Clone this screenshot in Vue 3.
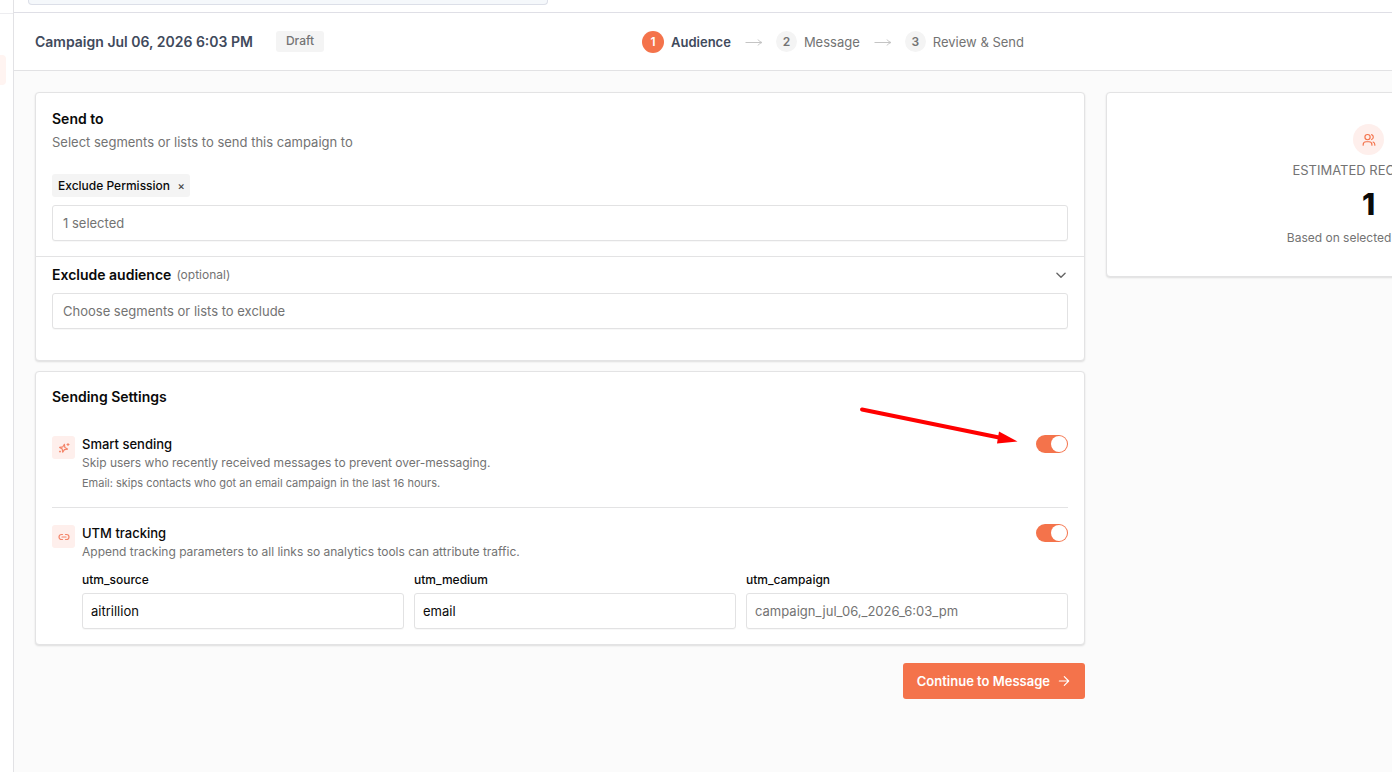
<script setup>
import { ref } from 'vue'

const steps = [
  { number: 1, label: 'Audience', active: true },
  { number: 2, label: 'Message', active: false },
  { number: 3, label: 'Review & Send', active: false },
]
const smartSending = ref(true)
const utmTracking = ref(true)
const utmFields = ref([
  { id: 'utm_source', value: 'aitrillion', placeholder: '' },
  { id: 'utm_medium', value: 'email', placeholder: '' },
  { id: 'utm_campaign', value: '', placeholder: 'campaign_jul_06,_2026_6:03_pm' },
])
</script>

<template>
  <div class="shell">
    <aside class="sidebar">
      <div class="sidebar-top"></div>
      <div class="sidebar-active"></div>
    </aside>
    <div class="main">
      <div class="topbar">
        <div class="search"></div>
      </div>

      <header class="header">
        <div class="heading">
          <h1>Campaign Jul 06, 2026 6:03 PM</h1>
          <span class="draft">Draft</span>
        </div>
        <ol class="steps">
          <li v-for="step in steps" :key="step.number" class="step" :class="{ active: step.active }">
            <svg v-if="step.number > 1" class="step-arrow" width="18" height="8" viewBox="0 0 18 8" fill="none" stroke="currentColor">
              <path d="M0.5 4.5H16.5M13 1.5Q14.5 4 17 4.5Q14.5 5 13 7.5" />
            </svg>
            <span class="step-number">{{ step.number }}</span>
            <span>{{ step.label }}</span>
          </li>
        </ol>
      </header>

      <main class="content">
        <div class="forms">
          <section class="card">
            <div class="send-to">
              <h2>Send to</h2>
              <p class="desc">Select segments or lists to send this campaign to</p>
              <span class="chip">Exclude Permission <button type="button" aria-label="Remove Exclude Permission">×</button></span>
              <input class="field picker" type="text" placeholder="1 selected" aria-label="Send to" />
            </div>
            <div class="exclude">
              <button class="exclude-toggle" type="button">
                <span class="exclude-title">Exclude audience</span>
                <span class="optional">(optional)</span>
                <svg class="chevron" width="14" height="14" viewBox="0 0 24 24" fill="none" stroke="currentColor" stroke-width="2.4" stroke-linecap="round" stroke-linejoin="round">
                  <path d="m5 9 7 7 7-7" />
                </svg>
              </button>
              <input class="field picker" type="text" placeholder="Choose segments or lists to exclude" aria-label="Exclude audience" />
            </div>
          </section>

          <section class="card settings">
            <h2>Sending Settings</h2>
            <div class="setting">
              <span class="tile">
                <svg width="12" height="12" viewBox="0 0 24 24" fill="none" stroke="currentColor" stroke-width="2.4" stroke-linecap="round" stroke-linejoin="round">
                  <g transform="rotate(12 11 13)">
                    <path d="M11 4.500 13.200 10.300 19 12.500 13.200 14.700 11 20.500 8.800 14.700 3 12.500 8.800 10.300Z" />
                  </g>
                  <path d="M20 3v4M22 5h-4M4 18v2M5 19H3" />
                </svg>
              </span>
              <div class="setting-text">
                <label class="setting-title" for="smart">Smart sending</label>
                <p class="note">Skip users who recently received messages to prevent over-messaging.</p>
                <p class="note small">Email: skips contacts who got an email campaign in the last 16 hours.</p>
              </div>
              <input id="smart" v-model="smartSending" class="switch" type="checkbox" role="switch" />
            </div>

            <div class="setting utm">
              <span class="tile">
                <svg width="12" height="12" viewBox="0 0 24 24" fill="none" stroke="currentColor" stroke-width="2.4" stroke-linecap="round" stroke-linejoin="round">
                  <path d="M9 17H7A5 5 0 0 1 7 7h2M15 7h2a5 5 0 1 1 0 10h-2M8 12h8" />
                </svg>
              </span>
              <div class="setting-text">
                <label class="setting-title" for="utm">UTM tracking</label>
                <p class="note">Append tracking parameters to all links so analytics tools can attribute traffic.</p>
              </div>
              <input id="utm" v-model="utmTracking" class="switch" type="checkbox" role="switch" />
              <div class="utm-fields">
                <div v-for="field in utmFields" :key="field.id" class="utm-field">
                  <label :for="field.id">{{ field.id }}</label>
                  <input :id="field.id" v-model="field.value" class="field" type="text" :placeholder="field.placeholder" />
                </div>
              </div>
            </div>

            <svg class="pointer" width="164" height="44" viewBox="0 0 164 44" aria-hidden="true">
              <path d="M6 6.5 143 34.5" stroke="#ff0000" stroke-width="4" stroke-linecap="round" />
              <path d="M143 28.5 161.5 38.5 141 40.5Z" fill="#ff0000" />
            </svg>
          </section>

          <button class="continue" type="button">
            Continue to Message
            <svg width="14" height="14" viewBox="0 0 24 24" fill="none" stroke="currentColor" stroke-width="2" stroke-linecap="round" stroke-linejoin="round">
              <path d="M4 12h16M12.500 4.500 20 12l-7.500 7.500" />
            </svg>
          </button>
        </div>

        <aside class="card estimate">
          <span class="people">
            <svg width="14" height="14" viewBox="0 0 24 24" fill="none" stroke="currentColor" stroke-width="2" stroke-linecap="round" stroke-linejoin="round">
              <circle cx="9.500" cy="7" r="4.500" />
              <path d="M2 21v-1a5 5 0 0 1 5-5h5a5 5 0 0 1 5 5v1M22 21v-1a5 5 0 0 0-3-4.600M16.500 2.800a4.500 4.500 0 0 1 0 8.400" />
            </svg>
          </span>
          <span class="estimate-label">ESTIMATED RECIPIENTS</span>
          <strong>1</strong>
          <span class="estimate-note">Based on selected segments</span>
        </aside>
      </main>
    </div>
  </div>
</template>

<style>
body {
  margin: 0;
  background: #fbfbfb;
}
</style>

<style scoped>
* {
  box-sizing: border-box;
}
.shell {
  display: grid;
  grid-template-columns: 14px calc(100vw + 246px);
  min-height: 100vh;
  overflow: hidden;
  font-family: Inter, "Open Sans", sans-serif;
  font-size: 13px;
  line-height: 20px;
  color: #0a0a0a;
}
h1, h2, p, ol {
  margin: 0;
  padding: 0;
}
input, button {
  font: inherit;
}
.sidebar {
  background: #ffffff;
  border-right: 1px solid #e2e2e5;
}
.sidebar-top {
  height: 14px;
  border-bottom: 1px solid #ededf0;
}
.sidebar-active {
  width: 6px;
  height: 30px;
  margin-top: 41px;
  background: #fff4f1;
  border-radius: 0 4px 4px 0;
}
.topbar {
  height: 13px;
  padding-left: 14px;
  background: #ffffff;
  border-bottom: 1px solid #dfdfe6;
}
.search {
  width: 520px;
  height: 5px;
  background: #f5f8fb;
  border: 1px solid #dcdfe8;
  border-top: 0;
  border-radius: 0 0 4px 4px;
}
.header {
  display: grid;
  grid-template-columns: 1fr auto 1fr;
  align-items: center;
  height: 58px;
  padding: 0 21px;
  background: #ffffff;
  border-bottom: 1px solid #e2e2e4;
}
.heading {
  display: flex;
  align-items: center;
  gap: 23px;
}
h1 {
  font-size: 14px;
  font-weight: 600;
  color: #3f4a5c;
}
.draft {
  height: 21px;
  padding: 0 10px;
  border-radius: 3px;
  background: #f4f4f4;
  color: #737373;
  font-size: 12px;
  font-weight: 500;
}
.steps {
  display: flex;
  list-style: none;
}
.step {
  display: flex;
  align-items: center;
  gap: 7px;
  color: #737373;
}
.step-arrow {
  margin: 0 6px 0 14px;
  color: #c4c4c4;
}
.step-number {
  width: 21px;
  border-radius: 50%;
  background: #f4f4f4;
  font-size: 12px;
  font-weight: 600;
  line-height: 21px;
  text-align: center;
}
.step.active {
  color: #3f4a5c;
  font-weight: 600;
}
.active .step-number {
  width: 22px;
  line-height: 22px;
  background: #f4734b;
  color: #ffffff;
}
.content {
  display: grid;
  grid-template-columns: 2fr 1fr;
  align-items: start;
  gap: 21px;
  padding: 21px;
}
.forms {
  display: flex;
  flex-direction: column;
  gap: 10px;
}
.card {
  background: #ffffff;
  border: 1px solid #e3e3e4;
  border-radius: 4px;
  box-shadow: 0 1px 2px rgba(0, 0, 0, 0.12);
}
h2 {
  font-size: 14px;
  font-weight: 600;
  line-height: 20px;
}
.desc {
  margin: 3px 0 22px;
  color: #737373;
}
.send-to {
  padding: 16px 16px 15px;
}
.chip {
  display: flex;
  align-items: center;
  gap: 7px;
  width: fit-content;
  height: 23px;
  padding: 0 5px 0 6px;
  margin-bottom: 8px;
  border-radius: 3px;
  background: #f4f4f4;
  font-size: 12px;
  font-weight: 500;
}
.chip button {
  padding: 0;
  border: 0;
  background: none;
  width: 8px;
  line-height: 12px;
  font-size: 11px;
  color: #444444;
}
.field {
  display: block;
  width: 100%;
  height: 36px;
  padding: 0 8px;
  border: 1px solid #e2e2e3;
  border-radius: 3px;
  background: #ffffff;
  color: #0a0a0a;
  outline: none;
  box-shadow: 0 1px 1px rgba(0, 0, 0, 0.03);
}
.picker {
  padding: 0 10px;
}
.field::placeholder {
  color: #737373;
  opacity: 1;
}
.exclude {
  padding: 8px 16px 31px;
  border-top: 1px solid #e3e3e4;
}
.exclude-toggle {
  display: flex;
  align-items: center;
  gap: 5px;
  width: 100%;
  height: 20px;
  margin-bottom: 8px;
  padding: 0;
  border: 0;
  background: none;
  color: #0a0a0a;
}
.exclude-title {
  font-size: 14px;
  font-weight: 600;
}
.optional {
  font-size: 12px;
  color: #737373;
}
.chevron {
  margin-left: auto;
  color: #666666;
}
.settings {
  position: relative;
  padding: 15px 16px;
}
.setting {
  display: grid;
  grid-template-columns: 23px 1fr auto;
  column-gap: 7px;
  padding: 27px 0 15px;
}
.setting.utm {
  padding: 15px 0 0;
  border-top: 1px solid #e3e3e4;
}
.tile {
  display: flex;
  align-items: center;
  justify-content: center;
  height: 23px;
  margin-top: 2px;
  border-radius: 3px;
  background: #feefec;
  color: #f4856a;
}
.setting-title {
  display: block;
  font-weight: 500;
}
.note {
  font-size: 12px;
  line-height: 18px;
  color: #737373;
}
.small {
  padding-top: 2px;
  font-size: 11px;
}
.switch {
  appearance: none;
  display: flex;
  align-items: center;
  width: 32px;
  height: 18px;
  margin: 1px 0 0;
  padding: 0 1px;
  border-radius: 9px;
  background: #d4d4d4;
}
.switch::before {
  content: "";
  width: 16px;
  height: 16px;
  border-radius: 50%;
  background: #ffffff;
}
.switch:checked {
  justify-content: flex-end;
  background: #f4734b;
}
.utm-fields {
  grid-column: 2 / -1;
  display: grid;
  grid-template-columns: repeat(3, 1fr);
  gap: 10px;
  margin-top: 9px;
}
.utm-field label {
  display: block;
  margin-bottom: 3px;
  font-size: 12px;
  font-weight: 500;
}
.pointer {
  position: absolute;
  top: 31px;
  right: 64px;
}
.continue {
  display: flex;
  align-items: center;
  align-self: flex-end;
  gap: 7px;
  height: 36px;
  margin-top: 8px;
  padding: 0 14px;
  border: 0;
  border-radius: 3px;
  background: #f4734b;
  color: #ffffff;
  font-weight: 600;
}
.estimate {
  display: flex;
  flex-direction: column;
  align-items: center;
  padding: 31px 16px 28px;
  color: #737373;
  font-size: 12px;
}
.people {
  display: flex;
  align-items: center;
  justify-content: center;
  width: 31px;
  height: 31px;
  border-radius: 50%;
  background: #feefec;
  color: #f4734b;
}
.estimate-label {
  margin-top: 5px;
  font-size: 13px;
}
.estimate strong {
  margin: 7px 0;
  color: #0a0a0a;
  font-size: 30px;
  font-weight: 800;
  line-height: 34px;
}
</style>
